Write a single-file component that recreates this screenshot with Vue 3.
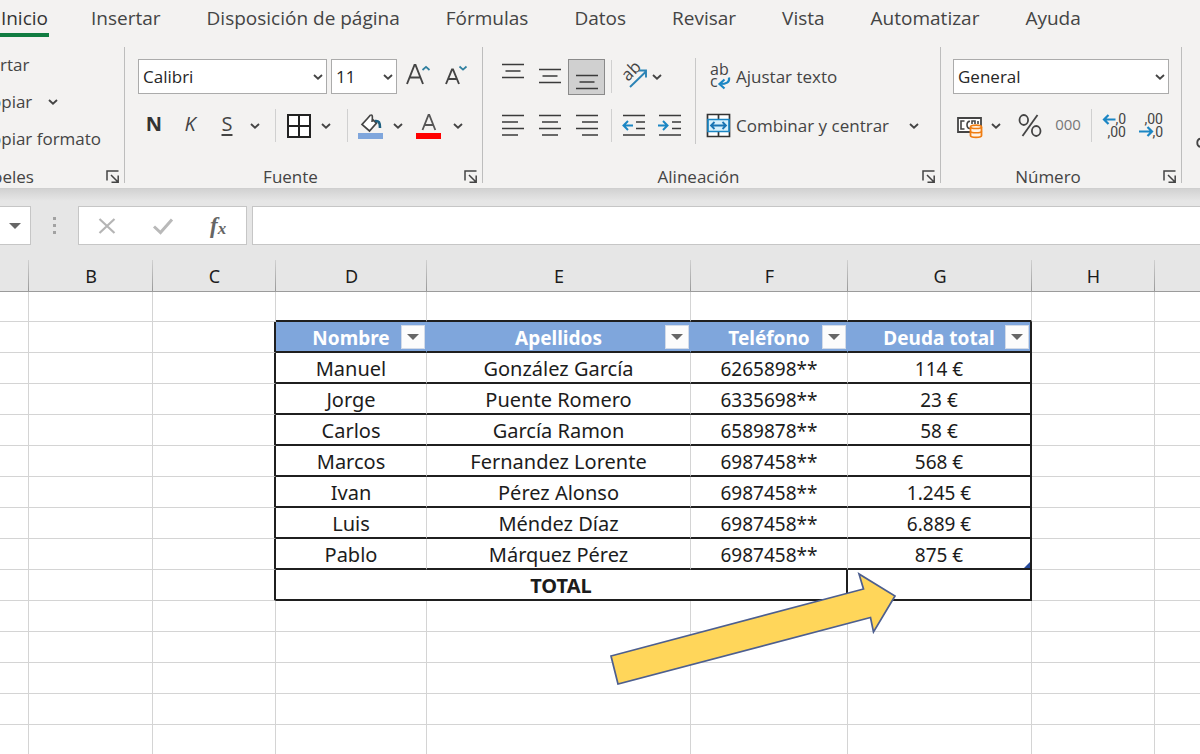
<script setup>
import { ref, h } from 'vue'

const tabs = ['Inicio', 'Insertar', 'Disposición de página', 'Fórmulas', 'Datos', 'Revisar', 'Vista', 'Automatizar', 'Ayuda']
const columns = ['A', 'B', 'C', 'D', 'E', 'F', 'G', 'H', 'I']
const headings = ['Nombre', 'Apellidos', 'Teléfono', 'Deuda total']
const people = [
  ['Manuel', 'González García', '6265898**', '114 €'],
  ['Jorge', 'Puente Romero', '6335698**', '23 €'],
  ['Carlos', 'García Ramon', '6589878**', '58 €'],
  ['Marcos', 'Fernandez Lorente', '6987458**', '568 €'],
  ['Ivan', 'Pérez Alonso', '6987458**', '1.245 €'],
  ['Luis', 'Méndez Díaz', '6987458**', '6.889 €'],
  ['Pablo', 'Márquez Pérez', '6987458**', '875 €'],
]
const font = ref('Calibri')
const size = ref('11')
const format = ref('General')
const formula = ref('')

const Chevron = () =>
  h('svg', { width: 10, height: 6, viewBox: '0 0 10 6', 'aria-hidden': 'true' }, [
    h('path', { d: 'M1 1l4 3.6L9 1', fill: 'none', stroke: '#444', 'stroke-width': 1.9 }),
  ])
const Launcher = () =>
  h('svg', { width: 14, height: 14, viewBox: '0 0 14 14', 'aria-hidden': 'true' }, [
    h('path', { d: 'M1 10.5V1h11.5M5 5l6.5 6.5M12.2 5.5v6.7H5.5', fill: 'none', stroke: '#444', 'stroke-width': 1.5 }),
  ])
const Lines = (props) =>
  h('svg', { width: 24, height: 28, viewBox: '0 0 24 28', 'aria-hidden': 'true' }, [
    h('path', { d: props.d, fill: 'none', stroke: '#3b3b3b', 'stroke-width': 1.7 }),
  ])
Lines.props = ['d']
</script>

<template>
  <div class="app">
    <header class="ribbon">
      <nav class="tabs" aria-label="Cinta de opciones">
        <button v-for="(t, i) in tabs" :key="t" class="tab" :class="{ active: i === 0 }">{{ t }}</button>
      </nav>

      <div class="groups">
        <section class="group clipboard">
          <div class="clip-rows">
            <button class="clip">rtar</button>
            <button class="clip cut">opiar <Chevron class="clip-chev" /></button>
            <button class="clip cut">opiar formato</button>
          </div>
          <footer class="caption clip-caption">peles</footer>
          <button class="launch" aria-label="Opciones de portapapeles"><Launcher /></button>
        </section>

        <section class="group font">
          <div class="row">
            <label class="drop w-font">
              <select v-model="font" aria-label="Fuente"><option>Calibri</option></select><Chevron />
            </label>
            <label class="drop w-size">
              <select v-model="size" aria-label="Tamaño"><option>11</option></select><Chevron />
            </label>
            <button class="b b38" aria-label="Aumentar tamaño">
              <svg width="26" height="26" viewBox="0 0 26 26"><path d="M2 20L9.500 1h1L18 20M5 13.500h10" fill="none" stroke="#444" stroke-width="1.900" /><path d="M17.500 6L21 2.800l3.500 3.200" fill="none" stroke="#2f7f9f" stroke-width="1.700" /></svg>
            </button>
            <button class="b b38" aria-label="Reducir tamaño">
              <svg width="26" height="26" viewBox="0 0 26 26"><path d="M3 20L9 5.500h1L16 20M5.500 15h8" fill="none" stroke="#444" stroke-width="1.900" /><path d="M16.500 2.500L20 5.700l3.500-3.200" fill="none" stroke="#2f7f9f" stroke-width="1.700" /></svg>
            </button>
          </div>
          <div class="row">
            <button class="b b36 bold">N</button>
            <button class="b b36 italic">K</button>
            <button class="b b38 under">S</button>
            <button class="b b18" aria-label="Más subrayado"><Chevron /></button>
            <i class="sep s22"></i>
            <button class="b b26" aria-label="Bordes">
              <svg width="24" height="24" viewBox="0 0 24 24"><path d="M1 1h22v22H1zM12 1v22M1 12h22" fill="#fff" stroke="#222" stroke-width="2" /></svg>
            </button>
            <button class="b b28" aria-label="Más bordes"><Chevron /></button>
            <i class="sep s14"></i>
            <button class="b b34" aria-label="Color de relleno">
              <svg width="26" height="26" viewBox="0 0 26 26">
                <path d="M0 20h25v6H0z" fill="#7fa6dc" />
                <path d="M12.500 2L9 6 4 11.500l7.500 6.500 7-8-4-3.500" fill="#fff" stroke="#444" stroke-width="1.700" />
                <path d="M12.500 2c2.500-.5 2 2.500 1.500 7" fill="none" stroke="#444" stroke-width="1.600" />
                <path d="M17 8c4-.5 5 1.500 5 7" fill="none" stroke="#1d5f80" stroke-width="2.600" />
              </svg>
            </button>
            <button class="b b20" aria-label="Más rellenos"><Chevron /></button>
            <button class="b b42" aria-label="Color de fuente">
              <svg width="26" height="26" viewBox="0 0 26 26"><path d="M0 20h25v6H0z" fill="#f00" /><path d="M6.500 17L12.500 2h.8l6 15M8.500 12h9" fill="none" stroke="#555" stroke-width="1.800" /></svg>
            </button>
            <button class="b b16" aria-label="Más colores"><Chevron /></button>
          </div>
          <footer class="caption">Fuente</footer>
          <button class="launch" aria-label="Opciones de fuente"><Launcher /></button>
        </section>

        <section class="group align">
          <div class="align-body">
            <div class="align-left">
              <div class="row">
                <button class="b b37" aria-label="Alinear arriba"><Lines d="M1 1.500h22M4.500 8h15M1 14.500h22" /></button>
                <button class="b b37" aria-label="Alinear en medio"><Lines d="M1 6.500h22M4.500 13h15M1 19.500h22" /></button>
                <button class="b b37 pressed" aria-label="Alinear abajo" aria-pressed="true"><Lines d="M1 12.500h22M4.500 19h15M1 25.500h22" /></button>
                <i class="sep s12"></i>
                <button class="b b34" aria-label="Orientación">
                  <svg width="28" height="28" viewBox="0 0 28 28">
                    <text x="0" y="0" transform="translate(8 19) rotate(-45)" font-size="17" fill="#444">ab</text>
                    <path d="M10 24L26 8.500M19 7.500h7v7" fill="none" stroke="#2b83b5" stroke-width="1.900" />
                  </svg>
                </button>
                <button class="b b12" aria-label="Más orientaciones"><Chevron /></button>
              </div>
              <div class="row">
                <button class="b b37" aria-label="Izquierda"><Lines d="M1 3.500h22M1 10h16M1 16.500h22M1 23h16" /></button>
                <button class="b b37" aria-label="Centrar"><Lines d="M1 3.500h22M4 10h16M1 16.500h22M4 23h16" /></button>
                <button class="b b37" aria-label="Derecha"><Lines d="M1 3.500h22M7 10h16M1 16.500h22M7 23h16" /></button>
                <i class="sep s12"></i>
                <button class="b b34" aria-label="Disminuir sangría">
                  <svg width="24" height="28" viewBox="0 0 24 28"><path d="M1 3.500h22M14 10h9M14 16.500h9M1 23h22" fill="none" stroke="#3b3b3b" stroke-width="1.700" /><path d="M11 13.500H2M6 9L1.500 13.500 6 18" fill="none" stroke="#1b86c4" stroke-width="2" /></svg>
                </button>
                <button class="b b38" aria-label="Aumentar sangría">
                  <svg width="24" height="28" viewBox="0 0 24 28"><path d="M1 3.500h22M14 10h9M14 16.500h9M1 23h22" fill="none" stroke="#3b3b3b" stroke-width="1.700" /><path d="M0 13.500h9M5 9l4.500 4.500L5 18" fill="none" stroke="#1b86c4" stroke-width="2" /></svg>
                </button>
              </div>
            </div>
            <div class="align-right">
              <div class="row">
                <button class="b wide">
                  <svg width="26" height="28" viewBox="0 0 26 28">
                    <text x="4" y="12" font-size="16" fill="#444">ab</text>
                    <text x="4" y="24" font-size="16" fill="#444">c</text>
                    <path d="M23 14.500c1 5-3 6.500-9 6.500M18.500 16.500L13.500 21l5 4.500" fill="none" stroke="#1b86c4" stroke-width="2.200" />
                  </svg>
                  Ajustar texto
                </button>
              </div>
              <div class="row">
                <button class="b wide">
                  <svg width="26" height="28" viewBox="0 0 26 28">
                    <path d="M1.500 2.500h22v22h-22zM12.500 2.500v5M12.500 19.500v5" fill="#fff" stroke="#333" stroke-width="1.700" />
                    <path d="M2 7.500h21v12H2z" fill="#d8f1fc" stroke="#1b86c4" stroke-width="1.700" />
                    <path d="M5 13.500h15M8.500 10L5 13.500 8.500 17M16.500 10l3.500 3.500-3.500 3.500" fill="none" stroke="#1b76b4" stroke-width="1.800" />
                  </svg>
                  Combinar y centrar
                </button>
                <button class="b b50" aria-label="Más opciones de combinar"><Chevron /></button>
              </div>
            </div>
          </div>
          <footer class="caption">Alineación</footer>
          <button class="launch" aria-label="Opciones de alineación"><Launcher /></button>
        </section>

        <section class="group number">
          <div class="row">
            <label class="drop w-format">
              <select v-model="format" aria-label="Formato de número"><option>General</option></select><Chevron />
            </label>
          </div>
          <div class="row">
            <button class="b b34" aria-label="Formato de contabilidad">
              <svg width="28" height="26" viewBox="0 0 28 26">
                <path d="M2 5h23v14H2z" fill="#fff" stroke="#444" stroke-width="1.800" />
                <path d="M8.500 8H5v8h3.500M14 8.500c-4-1-4 7.500 0 7M16 11V8h3v3M22 8v3" fill="none" stroke="#444" stroke-width="1.600" />
                <path d="M14.500 14c0-2.500 11-2.500 11 0v8.500c0 2.500-11 2.500-11 0z" fill="#fff3e6" stroke="#ef7d12" stroke-width="1.800" />
                <path d="M14.500 14c0 2 11 2 11 0M14.500 18.300c0 2 11 2 11 0" fill="none" stroke="#ef7d12" stroke-width="1.600" />
              </svg>
            </button>
            <button class="b b18" aria-label="Más monedas"><Chevron /></button>
            <button class="b b50" aria-label="Estilo porcentual">
              <svg width="26" height="26" viewBox="0 0 26 26"><path d="M20.500 2L5.500 23" stroke="#444" stroke-width="1.800" /><ellipse cx="6.800" cy="7" rx="4.300" ry="5" fill="none" stroke="#444" stroke-width="1.800" /><ellipse cx="19.200" cy="18" rx="4.300" ry="5" fill="none" stroke="#444" stroke-width="1.800" /></svg>
            </button>
            <button class="b b26 thousands">000</button>
            <i class="sep s20"></i>
            <button class="b b28" aria-label="Aumentar decimales">
              <svg width="28" height="28" viewBox="0 0 28 28">
                <path d="M14.500 7.500H3M7.500 3L3 7.500 7.500 12" fill="none" stroke="#1b86c4" stroke-width="2.200" />
                <text class="digits" x="25" y="12">,0</text><text class="digits" x="25" y="25">,00</text>
              </svg>
            </button>
            <button class="b b42" aria-label="Disminuir decimales">
              <svg width="28" height="28" viewBox="0 0 28 28">
                <text class="digits" x="27" y="12">,00</text><text class="digits" x="27" y="25">,0</text>
                <path d="M3 19.500h13M11.500 15l4.500 4.500-4.500 4.500" fill="none" stroke="#1b86c4" stroke-width="2.200" />
              </svg>
            </button>
          </div>
          <footer class="caption">Número</footer>
          <button class="launch" aria-label="Opciones de número"><Launcher /></button>
        </section>

        <div class="rest">
          <svg width="4" height="12" viewBox="0 0 4 12" aria-hidden="true"><path d="M5 1.500C0 2 0 9.500 5 10" fill="none" stroke="#444" stroke-width="1.800" /></svg>
        </div>
      </div>
    </header>

    <div class="formula-bar">
      <button class="name-box" aria-label="Cuadro de nombres"><span class="tri"></span></button>
      <span class="dots"><i></i><i></i><i></i></span>
      <div class="fx-box">
        <button aria-label="Cancelar"><svg width="20" height="20" viewBox="0 0 20 20"><path d="M2.500 3l15 14M17.500 3l-15 14" stroke="#b5b5b5" stroke-width="2.200" /></svg></button>
        <button aria-label="Introducir"><svg width="22" height="20" viewBox="0 0 22 20"><path d="M2 10.500l6.500 6L20 3.500" fill="none" stroke="#b9b9b9" stroke-width="3" /></svg></button>
        <button class="fx" aria-label="Insertar función">f<sub>x</sub></button>
      </div>
      <input v-model="formula" class="formula" aria-label="Barra de fórmulas" />
    </div>

    <main class="sheet">
      <table>
        <colgroup><col v-for="c in columns" :key="c" :class="'col-' + c" /></colgroup>
        <thead>
          <tr><th v-for="c in columns" :key="c" scope="col"><span v-if="c !== 'A' && c !== 'I'">{{ c }}</span></th></tr>
        </thead>
        <tbody>
          <tr class="blank">
            <td></td><td></td><td></td><td class="line"></td><td class="line"></td><td class="line"></td><td class="line"></td><td></td><td></td>
          </tr>
          <tr>
            <td></td><td></td><td class="edge"></td>
            <th v-for="t in headings" :key="t" class="head line" :class="{ edge: t === 'Deuda total' }">
              {{ t }}<button class="filter" :aria-label="'Filtrar ' + t"><span class="tri"></span></button>
            </th>
            <td></td><td></td>
          </tr>
          <tr v-for="(p, r) in people" :key="p[0]">
            <td></td><td></td><td class="edge"></td>
            <td v-for="(v, i) in p" :key="i" class="line" :class="{ edge: i === 3, name: i < 2 }">
              {{ v }}<span v-if="r === 6 && i === 3" class="handle"></span>
            </td>
            <td></td><td></td>
          </tr>
          <tr>
            <td></td><td></td><td class="edge"></td>
            <td colspan="3" class="line edge total">TOTAL</td>
            <td class="line edge">
              <svg class="arrow" width="290" height="114" viewBox="0 0 290 114" aria-hidden="true">
                <path d="M2 85L254.500 18 250 3l36 22-21.500 36-3-14.500L9 113z" fill="#ffd65a" stroke="#4d5f8f" stroke-width="1.700" />
              </svg>
            </td>
            <td></td><td></td>
          </tr>
          <tr v-for="n in 6" :key="n"><td v-for="c in columns" :key="c"></td></tr>
        </tbody>
      </table>
    </main>
  </div>
</template>

<style>
body { margin: 0; background: #fff; overflow: hidden; }
</style>

<style scoped>
* { box-sizing: border-box; }
.app { font-family: "Open Sans", "Noto Sans", sans-serif; color: #444; font-size: 17px; overflow: hidden; height: 100vh; }
button { font: inherit; color: inherit; background: none; border: 0; padding: 0; margin: 0; }
svg { display: block; flex: none; }
svg text { font-family: "Open Sans", "Noto Sans", sans-serif; }
svg .digits { font-family: Roboto, sans-serif; font-size: 14px; fill: #444; text-anchor: end; }

.ribbon { background: #f3f2f1; height: 189px; border-bottom: 1px solid #cfcfcf; }
.tabs { display: flex; gap: 46px; height: 47px; overflow: hidden; }
.tab { height: 37px; line-height: 36px; font-size: 19px; white-space: nowrap; flex: none; display: flex; align-items: flex-start; }
.tab.active { color: #333; box-shadow: inset 0 -4px #107c41; width: 49px; justify-content: flex-end; margin-right: -4px; padding-right: 1px; }

.groups { display: flex; height: 136px; }
.group { position: relative; flex: none; border-right: 1px solid #bdbdbd; padding-top: 11px; }
.row { display: flex; align-items: center; height: 37px; }
.row + .row { margin-top: 12px; }
.caption { position: absolute; left: 0; right: 26px; bottom: -4px; line-height: 20px; height: 20px; display: flex; align-items: center; justify-content: center; }
.launch { position: absolute; right: 4px; bottom: -1px; }

.clipboard { width: 125px; overflow: hidden; overflow: clip; }
.clip-rows { display: flex; flex-direction: column; margin-top: -12px; }
.clip { display: flex; align-items: center; height: 37px; white-space: nowrap; }
.cut { margin-left: -9px; }
.clip-chev { margin-left: 16px; }
.clip-caption { justify-content: flex-start; left: -8px; }

.font { width: 358px; padding-left: 11px; }
.font .row:first-child { padding-left: 2px; }
.align { width: 458px; padding-left: 11px; }
.number { width: 241px; padding-left: 12px; }
.rest { flex: 1; display: flex; justify-content: flex-end; padding-top: 90px; }

.drop { position: relative; display: flex; align-items: center; height: 35px; margin-right: 4px; }
.drop select { appearance: none; width: 100%; height: 100%; border: 1px solid #ababab; border-radius: 0; background: #fff; font: inherit; color: #262626; padding: 0 4px; }
.drop svg { position: absolute; right: 4px; pointer-events: none; }
.w-font { width: 189px; }
.w-size { width: 66px; margin-right: 2px; }
.w-format { width: 216px; }

.b { display: flex; align-items: center; justify-content: center; height: 36px; flex: none; white-space: nowrap; }
.b12 { width: 12px; } .b16 { width: 16px; } .b18 { width: 18px; } .b20 { width: 20px; }
.b26 { width: 26px; } .b28 { width: 28px; } .b34 { width: 34px; } .b36 { width: 36px; }
.b37 { width: 37px; } .b38 { width: 38px; } .b42 { width: 42px; } .b50 { width: 50px; }
.bold, .italic, .under { font-size: 20px; line-height: 32px; align-items: flex-start; }
.bold { font-weight: 700; color: #333; }
.italic { font-style: italic; }
.under { text-decoration: underline; text-underline-offset: 3px; }
.thousands { font-size: 15px; line-height: 32px; color: #777; align-items: flex-start; }
.pressed { background: #d0d0d0; border: 1px solid #8a8a8a; }
.sep { display: flex; justify-content: center; height: 33px; flex: none; }
.sep::before { content: ""; width: 1px; background: #d0d0d0; }
.s12 { width: 12px; } .s14 { width: 14px; } .s20 { width: 20px; } .s22 { width: 22px; }
.align-body { display: flex; }
.align-left { width: 202px; border-right: 1px solid #c8c8c8; }
.align-right { padding-left: 10px; }
.wide { gap: 4px; }

.formula-bar { display: flex; height: 71px; padding-top: 17px; background: linear-gradient(#d2d2d2, #e6e6e6 12px); }
.name-box { width: 31px; height: 39px; background: #fff; border: 1px solid #c6c6c6; border-left: 0; display: flex; align-items: center; justify-content: center; }
.tri { border: 6px solid transparent; border-top-color: #666; border-bottom: 0; }
.dots { width: 47px; height: 39px; display: flex; flex-direction: column; align-items: center; justify-content: center; gap: 4px; }
.dots i { width: 3px; height: 3px; background: #a2a2a2; }
.fx-box { width: 169px; height: 39px; background: #fff; border: 1px solid #c6c6c6; display: flex; margin-right: 5px; }
.fx-box button { flex: 1; display: flex; align-items: center; justify-content: center; }
.fx { font-family: "Liberation Serif", serif; font-style: italic; font-weight: 700; font-size: 23px; color: #666; }
.fx sub { font-size: 17px; line-height: 12px; align-self: center; padding-top: 6px; }
.formula { flex: 1; min-width: 0; height: 39px; border: 1px solid #c6c6c6; border-right: 0; background: #fff; font: inherit; padding: 0 8px; }

table { width: 100%; table-layout: fixed; border-collapse: separate; border-spacing: 0; font-family: "Noto Sans", "Open Sans", sans-serif; font-size: 19px; color: #1c1c1c; background: #fff; }
.col-A { width: 29px; } .col-B { width: 124px; } .col-C { width: 123px; } .col-D { width: 151px; } .col-E { width: 264px; }
.col-F { width: 157px; } .col-G { width: 184px; } .col-H { width: 123px; }
thead th { height: 32px; padding: 0; font-weight: 400; font-size: 18px; line-height: 28px; background: linear-gradient(#d0d0d0, #999) right / 1px 100% no-repeat #e6e6e6; border-bottom: 1px solid #9b9b9b; }
td, .head { position: relative; height: 31px; padding: 3px 0 0; line-height: 26px; text-align: center; white-space: nowrap; border-right: 1px solid #d4d4d4; border-bottom: 1px solid #d4d4d4; }
thead th:last-child { background: #e6e6e6; }
td:last-child { border-right: 0; }
.blank td { height: 30px; }
td.line, .head { border-bottom: 2px solid #1f1f1f; }
td.edge { border-right: 2px solid #1f1f1f; }
.name, .total { font-size: 20px; }
.head { background: #7fa6dc; color: #fff; font-weight: 700; border-right-color: #7fa6dc; }
.head.edge { border-right: 2px solid #1f1f1f; }
.filter { position: absolute; right: 1px; top: 3px; width: 24px; height: 24px; background: #fcfcfc; border: 1px solid #d3dbe8; display: flex; align-items: center; justify-content: center; }
.total { font-weight: 700; }
.handle { position: absolute; right: 0; bottom: 0; border: 3px solid #24489a; border-left-color: transparent; border-top-color: transparent; }
.arrow { position: absolute; right: 131px; top: 1px; z-index: 2; }
</style>
